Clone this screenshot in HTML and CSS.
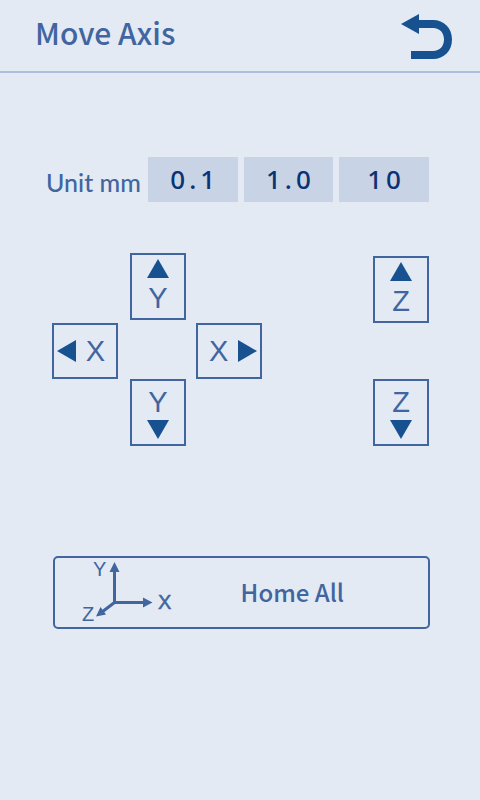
FILE: index.html
```html
<!DOCTYPE html>
<html lang="en">
<head>
<meta charset="utf-8">
<meta name="viewport" content="width=device-width, initial-scale=1">
<title>Move Axis</title>
<link rel="stylesheet" href="styles.css">
</head>
<body>
<header class="topbar">
  <h1 class="title">Move Axis</h1>
  <button class="back" type="button" aria-label="Back">
    <svg width="52" height="46" viewBox="0 0 52 46" aria-hidden="true"><path d="M0 10 18 0V6H32C43 6 51 14 51 25.500S43 45 32 45H10V37H32C39 37 43 32 43 25.500S39 14 32 14H18V20Z" fill="currentColor"/></svg>
  </button>
</header>
<main>
  <section class="units" aria-labelledby="unit-label">
    <span class="unit-label" id="unit-label">Unit mm</span>
    <div class="unit-options">
      <button class="unit" type="button">0.1</button>
      <button class="unit" type="button">1.0</button>
      <button class="unit" type="button">10</button>
    </div>
  </section>
  <section class="controls">
    <div class="pad">
      <button class="axis up" type="button"><svg class="arrow" width="22" height="19" viewBox="0 0 22 19" aria-hidden="true"><path d="M11 0 22 19H0Z"/></svg><span>Y</span></button>
      <button class="axis wide left" type="button"><svg class="arrow" width="19" height="22" viewBox="0 0 19 22" aria-hidden="true"><path d="M0 11 19 0V22Z"/></svg><span>X</span></button>
      <button class="axis wide right" type="button"><span>X</span><svg class="arrow" width="19" height="22" viewBox="0 0 19 22" aria-hidden="true"><path d="M19 11 0 0V22Z"/></svg></button>
      <button class="axis down" type="button"><span>Y</span><svg class="arrow" width="22" height="19" viewBox="0 0 22 19" aria-hidden="true"><path d="M11 19 22 0H0Z"/></svg></button>
    </div>
    <div class="lift">
      <button class="axis" type="button"><svg class="arrow" width="22" height="19" viewBox="0 0 22 19" aria-hidden="true"><path d="M11 0 22 19H0Z"/></svg><span>Z</span></button>
      <button class="axis down" type="button"><span>Z</span><svg class="arrow" width="22" height="19" viewBox="0 0 22 19" aria-hidden="true"><path d="M11 19 22 0H0Z"/></svg></button>
    </div>
  </section>
  <button class="home" type="button">
    <svg class="axes" width="96" height="69" viewBox="80 558 96 69" aria-hidden="true">
      <path d="M114.500 570V602.500H145M114.500 602.500 102 612" fill="none" stroke="currentColor" stroke-width="3"/>
      <path d="M114.500 562 119.500 572H109.500ZM152.500 602.500 143 607.500V597.500ZM96 616.500 100.500 607 106 614.500Z" fill="currentColor"/>
      <text class="axis-name" x="93" y="576">Y</text>
      <text class="axis-name" x="82" y="621">Z</text>
      <text class="axis-name heavy" x="158" y="609">X</text>
    </svg>
    <span class="home-text">Home All</span>
  </button>
</main>
</body>
</html>
```
FILE: styles.css
```css
* {
  box-sizing: border-box;
}

body {
  margin: 0;
  background: #e3eaf4;
  color: #41659f;
  font-family: "Noto Sans CJK SC", "Noto Sans", sans-serif;
}

button {
  margin: 0;
  padding: 0;
  border: 0;
  border-radius: 0;
  background: none;
  color: inherit;
  font: inherit;
  cursor: pointer;
}

svg {
  display: block;
  flex: none;
  overflow: visible;
}

.topbar {
  display: flex;
  justify-content: space-between;
  height: 73px;
  padding: 12px 27px 0 35px;
  border-bottom: 2px solid #acc0db;
}

.title {
  margin: 0;
  font-size: 30px;
  font-weight: 500;
  line-height: 40px;
}

.back {
  align-self: flex-start;
  margin-top: 2px;
  color: #185190;
}

.units {
  display: flex;
  align-items: center;
  justify-content: space-between;
  gap: 7px;
  margin-top: 84px;
  padding: 0 51px 0 46px;
}

.unit-label {
  flex: none;
  padding-top: 4px;
  font-family: Lato, sans-serif;
  font-size: 25px;
  font-weight: 500;
  line-height: 32px;
}

.unit-options {
  display: flex;
  flex: 1;
  gap: 6px;
}

.unit {
  flex: 1;
  height: 45px;
  padding: 0 0 2px 4px;
  background: #c8d3e5;
  color: #0b3274;
  font-family: "Noto Sans", sans-serif;
  font-size: 26px;
  font-weight: 500;
  letter-spacing: 4px;
}

.controls {
  display: flex;
  align-items: flex-end;
  justify-content: space-between;
  margin-top: 51px;
  padding: 0 51px 0 52px;
}

.pad {
  display: grid;
  grid-template-columns: 66px 58px 66px;
  grid-template-rows: 67px 59px 67px;
  column-gap: 10px;
  place-items: end;
}

.lift {
  display: grid;
  row-gap: 56px;
}

.axis {
  display: flex;
  flex-direction: column;
  align-items: center;
  gap: 6px;
  width: 56px;
  height: 67px;
  padding-top: 4px;
  border: 2px solid #41659f;
  font-family: "Liberation Sans", Arial, sans-serif;
  font-size: 29px;
  line-height: 28px;
}

.down {
  padding-top: 7px;
  gap: 4px;
}

.wide {
  flex-direction: row;
  justify-content: space-between;
  width: 66px;
  height: 56px;
}

.arrow {
  fill: #185190;
}

.up {
  grid-area: 1 / 2;
}

.left {
  grid-area: 2 / 1;
  padding: 0 11px 0 3px;
}

.right {
  grid-area: 2 / 3;
  padding: 0 3px 0 11px;
}

.pad .down {
  grid-area: 3 / 2;
}

.home {
  display: flex;
  align-items: center;
  width: calc(100% - 103px);
  height: 73px;
  margin: 110px 50px 0 53px;
  padding: 0 84px 0 25px;
  border: 2px solid #41659f;
  border-radius: 5px;
}

.home-text {
  flex: 1;
  padding-bottom: 2px;
  text-align: right;
  font-size: 24px;
  font-weight: 500;
  line-height: 40px;
}

.axis-name {
  fill: currentColor;
  font-family: "Liberation Sans", Arial, sans-serif;
  font-size: 20px;
}

.heavy {
  stroke: currentColor;
  stroke-width: 0.5px;
}
```
